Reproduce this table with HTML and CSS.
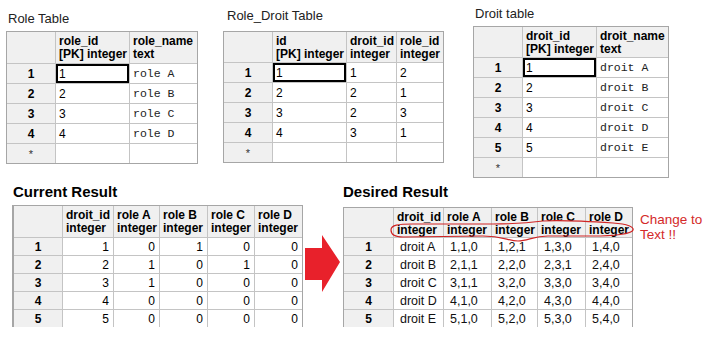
FILE: index.html
```html
<!DOCTYPE html>
<html>
<head>
<meta charset="utf-8">
<link rel="stylesheet" href="styles.css">
</head>
<body>
<div class="page">
  <section class="top">
    <div class="block b-role">
      <div class="title">Role Table</div>
      <div class="grid g-role">
        <div class="h"></div><div class="h">role_id<br>[PK] integer</div><div class="h">role_name<br>text</div>
        <div class="rh">1</div><div class="c sel">1</div><div class="c mono">role A</div>
        <div class="rh">2</div><div class="c">2</div><div class="c mono">role B</div>
        <div class="rh">3</div><div class="c">3</div><div class="c mono">role C</div>
        <div class="rh">4</div><div class="c">4</div><div class="c mono">role D</div>
        <div class="rh star">*</div><div class="c"></div><div class="c"></div>
      </div>
    </div>

    <div class="block b-rd">
      <div class="title">Role_Droit Table</div>
      <div class="grid g-rd">
        <div class="h"></div><div class="h">id<br>[PK] integer</div><div class="h">droit_id<br>integer</div><div class="h">role_id<br>integer</div>
        <div class="rh">1</div><div class="c sel">1</div><div class="c">1</div><div class="c">2</div>
        <div class="rh">2</div><div class="c">2</div><div class="c">2</div><div class="c">1</div>
        <div class="rh">3</div><div class="c">3</div><div class="c">2</div><div class="c">3</div>
        <div class="rh">4</div><div class="c">4</div><div class="c">3</div><div class="c">1</div>
        <div class="rh star">*</div><div class="c"></div><div class="c"></div><div class="c"></div>
      </div>
    </div>

    <div class="block b-droit">
      <div class="title">Droit table</div>
      <div class="grid g-droit">
        <div class="h"></div><div class="h">droit_id<br>[PK] integer</div><div class="h">droit_name<br>text</div>
        <div class="rh">1</div><div class="c sel">1</div><div class="c mono">droit A</div>
        <div class="rh">2</div><div class="c">2</div><div class="c mono">droit B</div>
        <div class="rh">3</div><div class="c">3</div><div class="c mono">droit C</div>
        <div class="rh">4</div><div class="c">4</div><div class="c mono">droit D</div>
        <div class="rh">5</div><div class="c">5</div><div class="c mono">droit E</div>
        <div class="rh star">*</div><div class="c"></div><div class="c"></div>
      </div>
    </div>
  </section>

  <section class="bottom">
    <div class="block b-cur">
      <div class="rtitle">Current Result</div>
      <div class="grid g-cur">
        <div class="h"></div><div class="h">droit_id<br>integer</div><div class="h">role A<br>integer</div><div class="h">role B<br>integer</div><div class="h">role C<br>integer</div><div class="h">role D<br>integer</div>
        <div class="rh">1</div><div class="c num">1</div><div class="c num">0</div><div class="c num">1</div><div class="c num">0</div><div class="c num">0</div>
        <div class="rh">2</div><div class="c num">2</div><div class="c num">1</div><div class="c num">0</div><div class="c num">1</div><div class="c num">0</div>
        <div class="rh">3</div><div class="c num">3</div><div class="c num">1</div><div class="c num">0</div><div class="c num">0</div><div class="c num">0</div>
        <div class="rh">4</div><div class="c num">4</div><div class="c num">0</div><div class="c num">0</div><div class="c num">0</div><div class="c num">0</div>
        <div class="rh">5</div><div class="c num">5</div><div class="c num">0</div><div class="c num">0</div><div class="c num">0</div><div class="c num">0</div>
      </div>
    </div>

    <svg class="arrow" width="40" height="60" viewBox="0 0 40 60">
      <path d="M2 13 L19 13 L19 0 L37 27 L19 57 L19 45 L2 45 Z" fill="#e8212b"/>
    </svg>

    <div class="block b-des">
      <div class="rtitle">Desired Result</div>
      <div class="grid g-des">
        <div class="h"></div><div class="h">droit_id<br>integer</div><div class="h">role A<br>integer</div><div class="h">role B<br>integer</div><div class="h">role C<br>integer</div><div class="h">role D<br>integer</div>
        <div class="rh">1</div><div class="c txt">droit A</div><div class="c txt">1,1,0</div><div class="c txt">1,2,1</div><div class="c txt">1,3,0</div><div class="c txt">1,4,0</div>
        <div class="rh">2</div><div class="c txt">droit B</div><div class="c txt">2,1,1</div><div class="c txt">2,2,0</div><div class="c txt">2,3,1</div><div class="c txt">2,4,0</div>
        <div class="rh">3</div><div class="c txt">droit C</div><div class="c txt">3,1,1</div><div class="c txt">3,2,0</div><div class="c txt">3,3,0</div><div class="c txt">3,4,0</div>
        <div class="rh">4</div><div class="c txt">droit D</div><div class="c txt">4,1,0</div><div class="c txt">4,2,0</div><div class="c txt">4,3,0</div><div class="c txt">4,4,0</div>
        <div class="rh">5</div><div class="c txt">droit E</div><div class="c txt">5,1,0</div><div class="c txt">5,2,0</div><div class="c txt">5,3,0</div><div class="c txt">5,4,0</div>
      </div>
      <svg class="loop" width="300" height="80" viewBox="0 0 300 80">
        <path d="M48 47 C48 42 55 41 70 41 L150 41 C170 41 185 40 200 38 C215 37 240 38 270 40 C285 41 291 44 290 47 C289 51 270 53 250 53 L205 53 C190 53 185 58 175 58 C165 58 160 53 140 53 L60 54 C52 54 48 51 48 47 Z" fill="none" stroke="#d02424" stroke-width="1.2"/>
      </svg>
    </div>

    <div class="note">Change to<br>Text !!</div>
  </section>
</div>
</body>
</html>
```

FILE: styles.css
```css
html, body {
  margin: 0;
  padding: 0;
  background: #ffffff;
}

.page {
  width: 717px;
  height: 351px;
  overflow: hidden;
  font-family: "Liberation Sans", Arial, sans-serif;
  color: #000;
}

.top {
  display: flex;
  align-items: flex-start;
  height: 183px;
  padding-left: 6px;
}

.title {
  font-size: 13px;
  line-height: 15px;
  color: #222;
  padding-left: 2px;
}

.b-role { margin-top: 11px; }
.b-role .grid { margin-top: 5px; }

.b-rd { margin-top: 8px; margin-left: 25px; }
.b-rd .title { padding-left: 4px; }
.b-rd .grid { margin-top: 8px; }

.b-droit { margin-top: 6px; margin-left: 29px; }
.b-droit .grid { margin-top: 5px; }

.grid {
  display: grid;
  gap: 1px;
  background: #c4c4c4;
  border: 1px solid #a6a6a6;
}

.g-role {
  grid-template-columns: 48px 73px 67px;
  grid-template-rows: 31px repeat(5, 19px);
}

.g-rd {
  grid-template-columns: 48px 73px 49px 46px;
  grid-template-rows: 30px repeat(5, 19px);
}

.g-droit {
  grid-template-columns: 48px 73px 71px;
  grid-template-rows: 30px repeat(6, 19px);
}

.h {
  background: #f0f0f0;
  font-weight: bold;
  font-size: 12px;
  line-height: 13px;
  padding: 3px 0 0 3px;
  white-space: nowrap;
  overflow: hidden;
}

.rh {
  background: #f0f0f0;
  font-weight: bold;
  font-size: 12px;
  display: flex;
  align-items: center;
  justify-content: center;
}

.rh.star {
  font-weight: normal;
  color: #333;
  font-size: 11px;
}

.c {
  background: #ffffff;
  font-size: 12px;
  display: flex;
  align-items: center;
  padding-left: 3px;
  white-space: nowrap;
  overflow: hidden;
}

.c.mono {
  font-family: "Liberation Mono", "Courier New", monospace;
  font-size: 11.5px;
  color: #222;
}

.c.sel {
  box-shadow: inset 0 0 0 2px #000;
}

/* bottom */
.bottom {
  display: flex;
  align-items: flex-start;
}

.rtitle {
  font-weight: bold;
  font-size: 15px;
  line-height: 17px;
  padding-left: 1px;
}

.b-cur { margin-left: 12px; }
.b-cur .grid { margin-top: 5px; }

.g-cur {
  border-left-width: 2px;
  border-bottom: 0;
  grid-template-columns: 48px 50px 45px 47px 46px 47px;
  grid-template-rows: 31px repeat(5, 17px);
}

.c.num {
  justify-content: flex-end;
  padding-left: 0;
  padding-right: 4px;
}

.arrow {
  display: block;
  margin-top: 52px;
  flex: none;
}

.b-des {
  position: relative;
}
.b-des .rtitle { padding-left: 0; }
.b-des .grid { margin-top: 7px; }

.g-des {
  border-bottom: 0;
  grid-template-columns: 49px 49px 47px 45px 47px 46px;
  grid-template-rows: 29px repeat(5, 17px);
}

.c.txt {
  font-size: 12.5px;
  padding-left: 6px;
  color: #111;
}

.loop {
  position: absolute;
  left: 0;
  top: 0;
  pointer-events: none;
}

.note {
  margin-left: 7px;
  margin-top: 29px;
  font-size: 13.5px;
  line-height: 15px;
  color: #d42a2a;
}
```
